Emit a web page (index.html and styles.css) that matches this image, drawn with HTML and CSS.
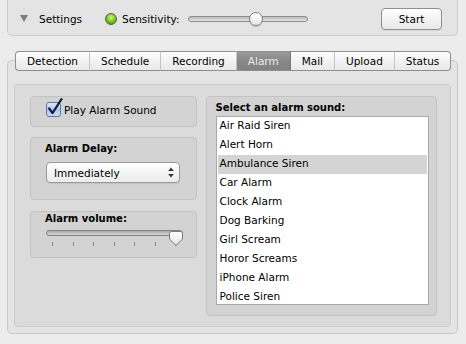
FILE: index.html
```html
<!DOCTYPE html>
<html lang="en">
<head>
    <meta charset="UTF-8">
    <meta name="viewport" content="width=device-width, initial-scale=1.0">
    <title>Alarm Settings</title>
    <link rel="stylesheet" href="styles.css">
</head>
<body>
    <div class="toolbar">
        <span class="disclosure"></span>
        <span class="label">Settings</span>
        <span class="led"></span>
        <span class="label">Sensitivity:</span>
        <div class="hslider">
            <div class="hslider-track"></div>
            <div class="hslider-knob"></div>
        </div>
        <button class="push">Start</button>
    </div>

    <div class="tabs-wrap">
        <div class="tabbar">
            <div class="tab">Detection</div>
            <div class="tab">Schedule</div>
            <div class="tab">Recording</div>
            <div class="tab selected">Alarm</div>
            <div class="tab">Mail</div>
            <div class="tab">Upload</div>
            <div class="tab">Status</div>
        </div>

        <div class="tabbox">
            <div class="pane">
                <div class="left-col">
                    <div class="group check-group">
                        <svg class="checkbox" width="17" height="19" viewBox="0 0 17 19">
                            <defs>
                                <linearGradient id="cbFill" x1="0" y1="0" x2="0" y2="1">
                                    <stop offset="0" stop-color="#e3eefb"/>
                                    <stop offset="0.5" stop-color="#a9c6ec"/>
                                    <stop offset="1" stop-color="#cfe1f8"/>
                                </linearGradient>
                            </defs>
                            <rect x="0.5" y="4.5" width="14" height="14" rx="2.5" fill="url(#cbFill)" stroke="#5b77a0"/>
                            <path d="M3.2 10.5 L6.5 15.2 L15.5 1.2" fill="none" stroke="#14203a" stroke-width="2.2" stroke-linecap="round" stroke-linejoin="round"/>
                        </svg>
                        <span class="check-label">Play Alarm Sound</span>
                    </div>

                    <div class="group delay-group">
                        <div class="group-title">Alarm Delay:</div>
                        <div class="popup">
                            <span>Immediately</span>
                            <svg width="6" height="11" viewBox="0 0 6 11">
                                <path d="M3 0.5 L5.8 4 L0.2 4 Z" fill="#333"/>
                                <path d="M3 10.5 L5.8 7 L0.2 7 Z" fill="#333"/>
                            </svg>
                        </div>
                    </div>

                    <div class="group volume-group">
                        <div class="group-title">Alarm volume:</div>
                        <div class="vslider">
                            <div class="vslider-track"></div>
                            <div class="ticks">
                                <span></span><span></span><span></span><span></span><span></span><span></span><span></span>
                            </div>
                            <svg class="vslider-knob" width="16" height="16" viewBox="0 0 16 16">
                                <defs>
                                    <linearGradient id="knobFill" x1="0" y1="0" x2="0" y2="1">
                                        <stop offset="0" stop-color="#ffffff"/>
                                        <stop offset="1" stop-color="#e4e4e4"/>
                                    </linearGradient>
                                </defs>
                                <path d="M1.5 2.5 Q1.5 0.5 3.5 0.5 H12.5 Q14.5 0.5 14.5 2.5 V8 L8 14.5 L1.5 8 Z" fill="url(#knobFill)" stroke="#7a7a7a"/>
                            </svg>
                        </div>
                    </div>
                </div>

                <div class="group list-group">
                    <div class="group-title">Select an alarm sound:</div>
                    <ul class="sound-list">
                        <li>Air Raid Siren</li>
                        <li>Alert Horn</li>
                        <li class="selected">Ambulance Siren</li>
                        <li>Car Alarm</li>
                        <li>Clock Alarm</li>
                        <li>Dog Barking</li>
                        <li>Girl Scream</li>
                        <li>Horor Screams</li>
                        <li>iPhone Alarm</li>
                        <li>Police Siren</li>
                    </ul>
                </div>
            </div>
        </div>
    </div>
</body>
</html>
```

FILE: styles.css
```css
body {
    margin: 0;
    width: 466px;
    height: 344px;
    overflow: hidden;
    background-color: #ececec;
    font-family: 'DejaVu Sans', sans-serif;
    font-size: 10.5px;
    color: #000;
}

/* Top settings strip */
.toolbar {
    display: flex;
    align-items: center;
    box-sizing: border-box;
    width: 451px;
    height: 36px;
    margin-left: 7px;
    padding: 2px 15px 0 12px;
    background-color: #e4e4e4;
    border: 1px solid #cdcdcd;
    border-top: none;
    border-radius: 0 0 5px 5px;
}

.disclosure {
    width: 0;
    height: 0;
    border-left: 4px solid transparent;
    border-right: 4px solid transparent;
    border-top: 7px solid #7c7c7c;
    margin-right: 11px;
}

.led {
    width: 10px;
    height: 10px;
    margin-left: 23px;
    margin-right: 5px;
    border-radius: 50%;
    border: 1px solid #4f6b36;
    background: radial-gradient(circle at 50% 35%, #d4f58a 0, #84cc2c 45%, #437f14 100%);
}

.hslider {
    position: relative;
    width: 120px;
    height: 14px;
    margin-left: 8px;
}

.hslider-track {
    box-sizing: border-box;
    height: 6px;
    margin-top: 4px;
    border: 1px solid #8d8d8d;
    border-radius: 3px;
    background: linear-gradient(#b8b8b8, #e4e4e4);
}

.hslider-knob {
    position: absolute;
    left: 61px;
    top: 0;
    box-sizing: border-box;
    width: 14px;
    height: 14px;
    border-radius: 50%;
    border: 1px solid #858585;
    background: linear-gradient(#ffffff, #e6e6e6);
    box-shadow: 0 1px 1px rgba(0, 0, 0, 0.2);
}

.push {
    margin-left: auto;
    box-sizing: border-box;
    width: 61px;
    height: 22px;
    padding: 0;
    font-family: inherit;
    font-size: 10.5px;
    color: #000;
    border: 1px solid #8f8f8f;
    border-radius: 4px;
    background: linear-gradient(#ffffff, #f3f3f3 50%, #e8e8e8);
    box-shadow: 0 1px 0 rgba(0, 0, 0, 0.06);
}

/* Tabs */
.tabs-wrap {
    width: 451px;
    margin: 15px 0 0 7px;
}

.tabbar {
    position: relative;
    z-index: 1;
    display: flex;
    padding-left: 8px;
    margin-bottom: -11px;
}

.tab {
    box-sizing: border-box;
    height: 20px;
    line-height: 18px;
    padding: 0 11px;
    border-top: 1px solid #8e8e8e;
    border-bottom: 1px solid #8e8e8e;
    border-right: 1px solid #c4c4c4;
    background: linear-gradient(#ffffff, #f2f2f2 50%, #e9e9e9);
}

.tab:first-child {
    border-left: 1px solid #8e8e8e;
    border-radius: 4px 0 0 4px;
}

.tab:last-child {
    border-right: 1px solid #8e8e8e;
    border-radius: 0 4px 4px 0;
}

.tab.selected {
    color: #ececec;
    border-right-color: #7a7a7a;
    background: linear-gradient(#9a9a9a, #888888 50%, #828282);
}

.tabbox {
    box-sizing: border-box;
    height: 274px;
    padding: 23px 6px 6px 6px;
    background-color: #e4e4e4;
    border: 1px solid #c7c7c7;
    border-radius: 5px;
}

.pane {
    display: flex;
    gap: 9px;
    padding: 11px 13px 10px 15px;
    background-color: #dbdbdb;
    border: 1px solid #cbcbcb;
    border-radius: 4px;
}

/* Group boxes */
.group {
    box-sizing: border-box;
    background-color: #d3d3d3;
    border: 1px solid #c3c3c3;
    border-radius: 4px;
}

.group-title {
    font-weight: bold;
    font-size: 10px;
    line-height: 14px;
}

.left-col {
    display: flex;
    flex-direction: column;
    width: 167px;
}

.check-group {
    display: flex;
    align-items: center;
    height: 31px;
    padding: 0 0 3px 15px;
}

.checkbox {
    margin-top: -5px;
}

.check-label {
    margin-left: 1px;
}

.delay-group {
    height: 63px;
    margin-top: 10px;
    padding: 4px 0 0 14px;
}

.popup {
    display: flex;
    align-items: center;
    justify-content: space-between;
    box-sizing: border-box;
    width: 134px;
    height: 21px;
    margin: 6px 0 0 1px;
    padding: 0 5px 0 7px;
    border: 1px solid #9a9a9a;
    border-radius: 4px;
    background: linear-gradient(#ffffff, #f4f4f4 50%, #ececec);
    box-shadow: 0 1px 1px rgba(0, 0, 0, 0.08);
}

.volume-group {
    height: 47px;
    margin-top: 11px;
    padding: 0 0 0 14px;
}

.vslider {
    position: relative;
    width: 137px;
    margin: 2px 0 0 1px;
}

.vslider-track {
    box-sizing: border-box;
    height: 6px;
    margin-top: 4px;
    border: 1px solid #828282;
    border-radius: 3px;
    background: linear-gradient(#a9a9a9, #d8d8d8);
}

.vslider-knob {
    position: absolute;
    right: -1px;
    top: 1px;
}

.ticks {
    display: flex;
    justify-content: space-between;
    margin-top: 6px;
    padding: 0 7px 0 6px;
}

.ticks span {
    width: 1px;
    height: 4px;
    background-color: #8c8c8c;
}

/* Sound list */
.list-group {
    width: 232px;
    padding: 4px 7px 10px 9px;
}

.sound-list {
    box-sizing: border-box;
    height: 189px;
    margin: 1px 0 0 0;
    padding: 0 1px;
    list-style: none;
    overflow: hidden;
    background-color: #fff;
    border: 1px solid #a9a9a9;
}

.sound-list li {
    height: 19px;
    line-height: 17px;
    padding-left: 2px;
}

.sound-list li.selected {
    background-color: #d4d4d4;
}
```
